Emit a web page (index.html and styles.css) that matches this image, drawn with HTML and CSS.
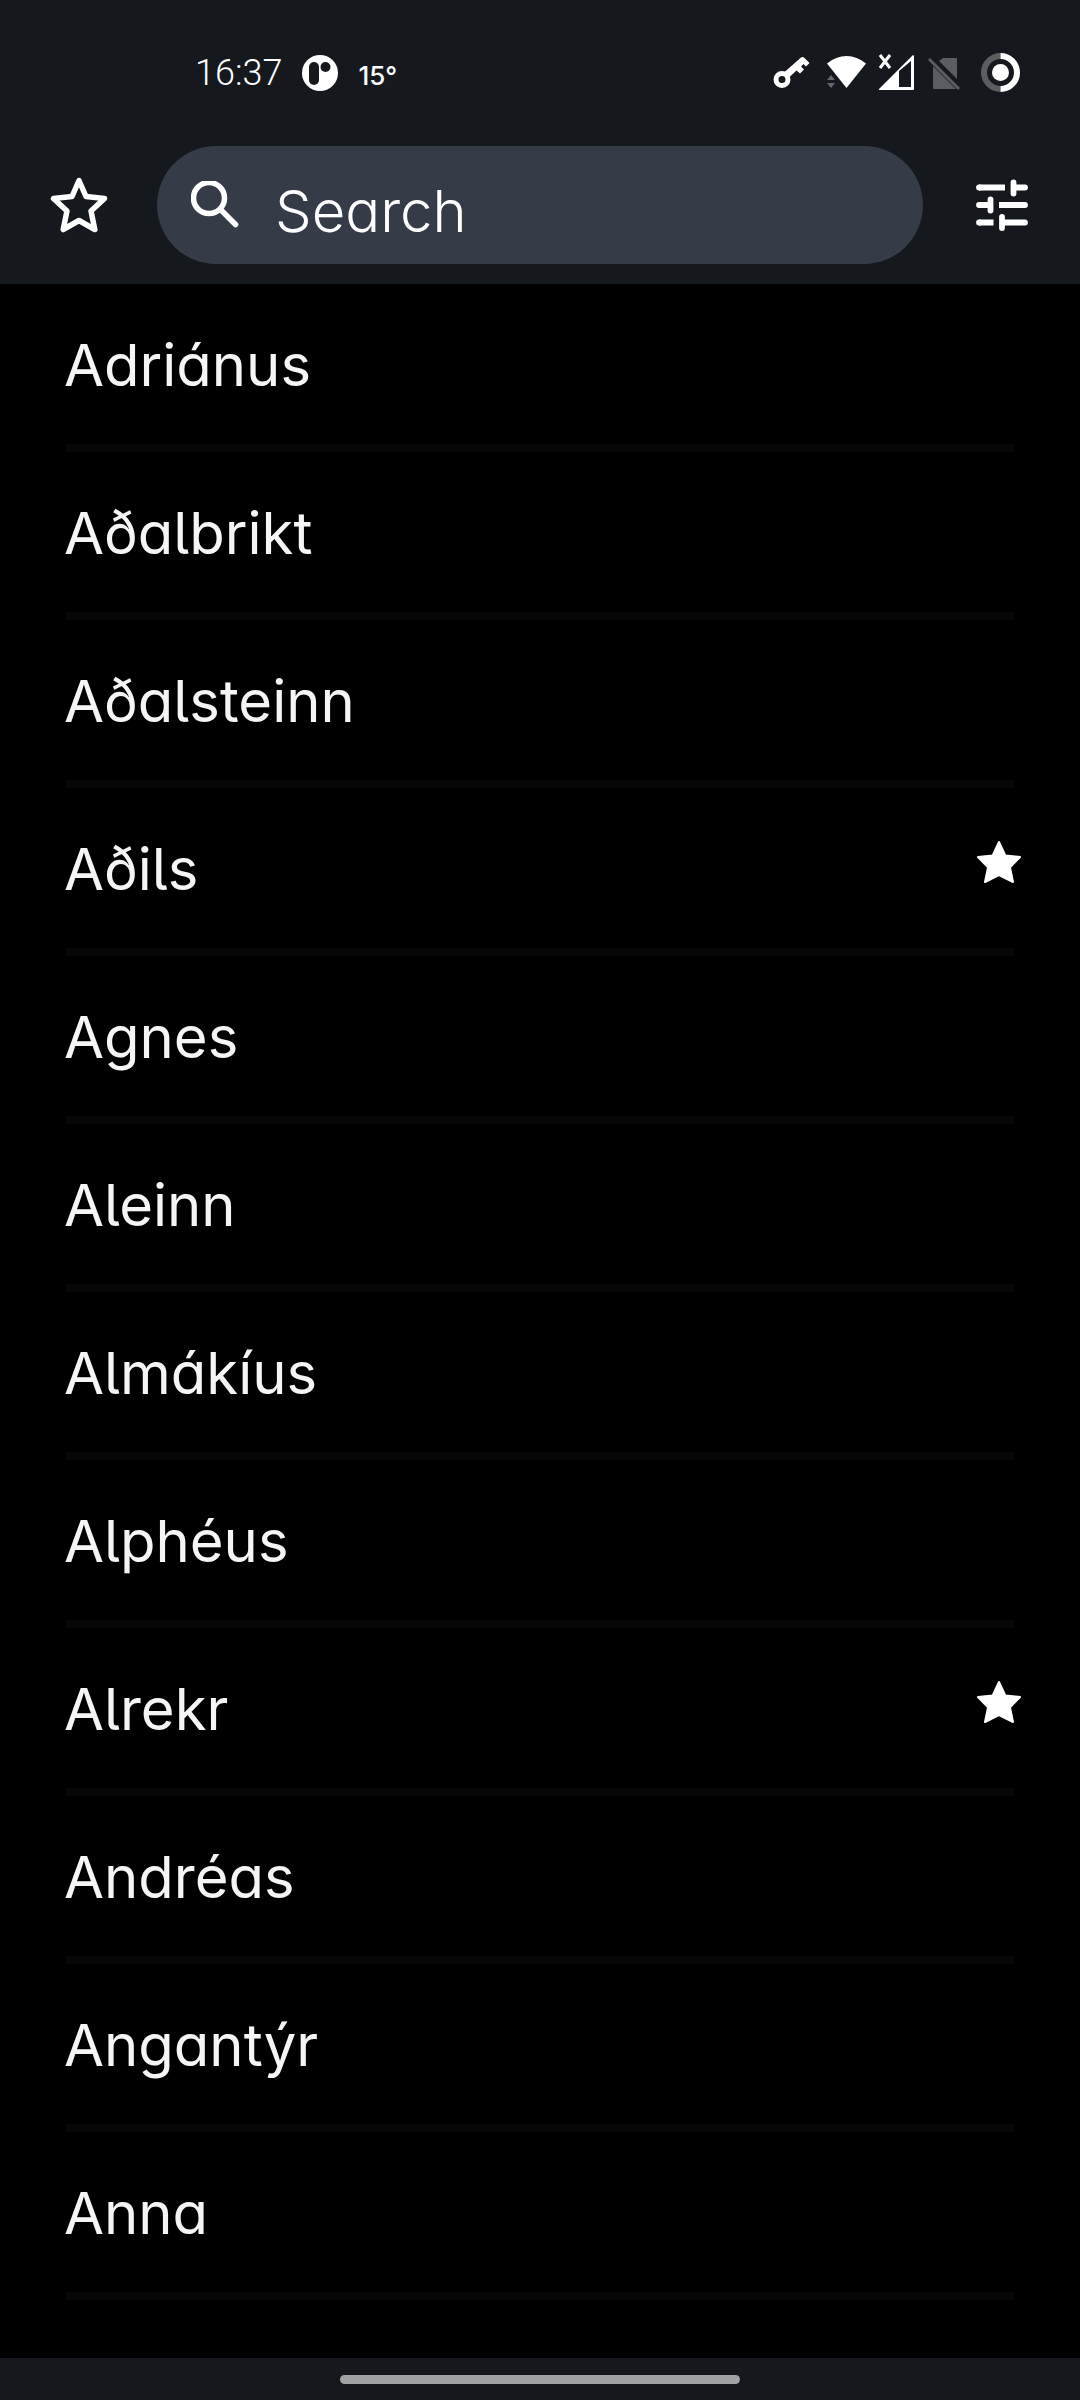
FILE: index.html
```html
<!DOCTYPE html>
<html lang="is">
<head>
<meta charset="utf-8">
<meta name="viewport" content="width=device-width, initial-scale=1">
<title>Names</title>
<link rel="stylesheet" href="styles.css">
</head>
<body>
<svg class="symbols" aria-hidden="true">
  <symbol id="star" viewBox="0 0 44 44"><path d="M22 2 L28.4 15.6 L43 17 L33 27.4 L36 42 L22 35 L8 42 L11 27.4 L1 17 L15.6 15.6 Z" fill="currentColor" stroke="currentColor" stroke-width="2" stroke-linejoin="round"/></symbol>
</svg>
<header class="app-bar">
  <div class="status">
    <div class="status-left">
      <span class="time">16:37</span>
      <svg class="badge" viewBox="0 0 36 36"><circle cx="18" cy="18" r="18" fill="#fff"/><rect x="7" y="7" width="10" height="23" rx="5" fill="#15181d"/><circle cx="23.500" cy="12" r="5" fill="#15181d"/></svg>
      <span class="temp">15°</span>
    </div>
    <div class="status-right">
      <svg viewBox="0 0 290 86" width="290" height="86" aria-label="Status icons">
        <circle cx="32" cy="49.500" r="6" fill="none" stroke="#fff" stroke-width="5"/>
        <path d="M34 42.500 L51 27.500 Q53 26.500 54.500 28 L59.500 33 L56 36.500 L53.500 34 L51 36.500 L54 39.500 L50 43.500 L46.500 40.500 L39 47.500 Z" fill="#fff"/>
        <path d="M96.500 58 L77 33.500 Q86 26 96.500 26 Q107 26 116 33.500 Z" fill="#fff"/>
        <path d="M81 45 L85 50 H77 Z M77 53 H85 L81 58 Z" fill="#66696c"/>
        <path d="M130 25 L140 38 M140 25 L130 38" fill="none" stroke="#fff" stroke-width="3"/>
        <path fill-rule="evenodd" d="M163 25 Q164 25 164 27 V59 Q164 60 163 60 H130 Q128 60 129 59 Z M149 41 V57 H161 V31 Z" fill="#fff"/>
        <path d="M193 28 H206 Q207 28 207 29 V49 L189 31 Z M183 36 L206 59 H184 Q183 59 183 58 Z" fill="#5b5e60"/>
        <path d="M179 29 L209 59" stroke="#5b5e60" stroke-width="3"/>
        <path d="M250.500 26 A16.500 16.500 0 0 0 250.500 59" fill="none" stroke="#5b5e60" stroke-width="6"/>
        <path d="M250.500 26 A16.500 16.500 0 0 1 250.500 59" fill="none" stroke="#fff" stroke-width="6"/>
        <circle cx="250.500" cy="42.500" r="8.500" fill="#fff"/>
      </svg>
    </div>
  </div>
  <div class="toolbar">
    <button class="icon-button" type="button" aria-label="Favourites">
      <svg viewBox="0 0 60 60" width="60" height="60"><path d="M30 5.500 L37 21.500 L55.500 23.500 L42 36 L45.800 54.500 L30 45.500 L14.200 54.500 L18 36 L4.500 23.500 L23 21.500 Z" fill="none" stroke="#fff" stroke-width="5.500" stroke-linejoin="round"/></svg>
    </button>
    <label class="search">
      <svg viewBox="0 0 48 48" width="48" height="48"><circle cx="18" cy="17" r="15.500" fill="none" stroke="#fff" stroke-width="5.500"/><path d="M31 30 L44.500 43.500" stroke="#fff" stroke-width="5.500" stroke-linecap="round"/></svg>
      <input type="search" placeholder="Search" aria-label="Search">
    </label>
    <button class="icon-button" type="button" aria-label="Filters">
      <svg viewBox="0 0 52 52" width="52" height="52" fill="none" stroke="#fff" stroke-width="5.800">
        <path d="M3 8.500 H4 M37.500 3.500 V14.500 M38 8.500 H49 M3 26 H14 M14.500 20.500 V31.500 M48 26 H49 M3 43.500 H4 M26 38 V49 M26 43.500 H49" stroke-linecap="round"/>
        <path d="M3 8.500 H29 M49 26 H23 M3 43.500 H17.500"/>
      </svg>
    </button>
  </div>
</header>
<main>
  <ul class="names">
    <li><span>Adriánus</span></li>
    <li><span>Aðalbrikt</span></li>
    <li><span>Aðalsteinn</span></li>
    <li><span>Aðils</span><svg class="mark" aria-label="Favourite"><use href="#star"/></svg></li>
    <li><span>Agnes</span></li>
    <li><span>Aleinn</span></li>
    <li><span>Almákíus</span></li>
    <li><span>Alphéus</span></li>
    <li><span>Alrekr</span><svg class="mark" aria-label="Favourite"><use href="#star"/></svg></li>
    <li><span>Andréas</span></li>
    <li><span>Angantýr</span></li>
    <li><span>Anna</span></li>
  </ul>
</main>
<footer class="nav-bar"><div class="handle"></div></footer>
</body>
</html>
```
FILE: styles.css
```css
* { box-sizing: border-box; }

body {
  margin: 0;
  min-height: 100vh;
  display: flex;
  flex-direction: column;
  background: #000;
  color: #f5f5f5;
  font-family: Inter, "DejaVu Sans", sans-serif;
  font-weight: 300;
  font-feature-settings: "cv11", "cv05";
}

svg { display: block; flex: none; }

.symbols { position: absolute; width: 0; height: 0; }

.app-bar { background: #15181d; padding-bottom: 20px; }

.status {
  display: flex;
  justify-content: space-between;
  align-items: center;
  height: 146px;
  padding: 0 40px 0 195px;
  color: #fff;
}

.status-left { display: flex; align-items: center; gap: 20px; }

.time { font: 300 36px/48px Roboto, sans-serif; }

.badge { width: 36px; height: 36px; }

.temp { font: 500 26px/32px Inter, sans-serif; padding-top: 6px; }

.toolbar {
  display: grid;
  grid-template-columns: 157px minmax(0, 1fr) 157px;
  height: 118px;
}

.icon-button {
  display: flex;
  align-items: center;
  justify-content: center;
  padding: 0;
  border: 0;
  background: none;
}

.search {
  display: flex;
  align-items: center;
  gap: 36px;
  padding: 0 34px;
  border-radius: 59px;
  background: #353b47;
}

.search input {
  flex: 1;
  min-width: 0;
  height: 100%;
  padding: 12px 0 0;
  border: 0;
  outline: 0;
  background: none;
  color: #fff;
  font: inherit;
  font-size: 58px;
  font-feature-settings: inherit;
}

.search input::placeholder { color: #fff; opacity: 1; }

.names { margin: 0; padding: 0; list-style: none; }

.names li {
  display: grid;
  grid-template: 160px 8px / 1fr auto;
  align-items: center;
  padding: 0 59px 0 64px;
  font-size: 58px;
  font-weight: 400;
}

.names span { padding-top: 2px; }

.names li::after {
  content: "";
  grid-row: 2;
  grid-column: 1 / -1;
  height: 8px;
  margin: 0 7px 0 2px;
  background: #060606;
}

.mark { width: 44px; height: 56px; padding-bottom: 12px; color: #fff; }

.nav-bar {
  display: flex;
  justify-content: center;
  margin-top: auto;
  padding: 17px 0 16px;
  background: #15181d;
}

.handle {
  width: 37%;
  height: 9px;
  border-radius: 5px;
  background: #a2a3a5;
}
```
